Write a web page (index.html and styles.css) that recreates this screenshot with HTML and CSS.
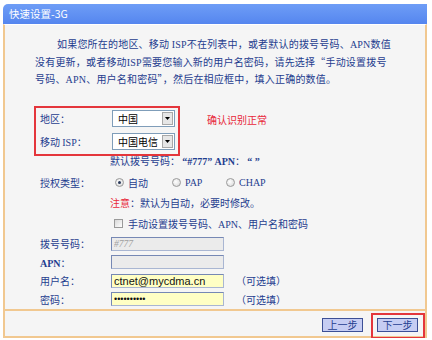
FILE: index.html
```html
<!DOCTYPE html>
<html lang="zh-CN">
<head>
<meta charset="utf-8">
<title>快速设置-3G</title>
<link rel="stylesheet" href="styles.css">
</head>
<body>
<div class="window">
  <div class="title">快速设置-3G</div>
  <div class="panel">
    <p class="intro">如果您所在的地区、移动 <span class="latin">ISP</span>不在列表中，或者默认的拨号号码、<span class="latin">APN</span>数值<br>没有更新，或者移动<span class="latin">ISP</span>需要您输入新的用户名密码，请先选择“手动设置拨号<br>号码、<span class="latin">APN</span>、用户名和密码”，然后在相应框中，填入正确的数值。</p>

    <div class="isp-area">
      <div class="isp-box">
        <div class="isp-row first">
          <span class="label">地区：</span>
          <div class="select"><span class="select-text">中国</span><svg class="arrow" width="11" height="13" viewBox="0 0 11 13"><rect x="0.5" y="0.5" width="10" height="12" fill="#e6e6e6" stroke="#a8a8a8"/><polygon points="3,5 8,5 5.5,8" fill="#000"/></svg></div>
        </div>
        <div class="isp-row second">
          <span class="label">移动 <span class="latin">ISP</span>：</span>
          <div class="select"><span class="select-text">中国电信</span><svg class="arrow" width="11" height="13" viewBox="0 0 11 13"><rect x="0.5" y="0.5" width="10" height="12" fill="#e6e6e6" stroke="#a8a8a8"/><polygon points="3,5 8,5 5.5,8" fill="#000"/></svg></div>
        </div>
      </div>
      <span class="red-note">确认识别正常</span>
    </div>

    <div class="form">
      <div class="default-line">默认拨号号码： <span class="latin bold">“#777”</span> <span class="latin bold">APN</span>： <span class="latin bold">“ ”</span></div>

      <div class="form-row auth-row">
        <span class="label wide">授权类型：</span>
        <span class="option opt-auto"><span class="radio checked"></span>自动</span>
        <span class="option opt-pap"><span class="radio"></span><span class="latin">PAP</span></span>
        <span class="option"><span class="radio"></span><span class="latin">CHAP</span></span>
      </div>

      <div class="form-row note-row"><span><span class="warn">注意</span>：默认为自动，必要时修改。</span></div>

      <div class="form-row check-row"><span class="checkbox"></span><span>手动设置拨号号码、<span class="latin">APN</span>、用户名和密码</span></div>

      <div class="form-row field-row dial-row">
        <span class="label">拨号号码：</span>
        <input class="field disabled hint" type="text" value="#777" disabled>
      </div>
      <div class="form-row field-row">
        <span class="label"><span class="latin bold">APN</span>：</span>
        <input class="field disabled" type="text" value="" disabled>
      </div>
      <div class="form-row field-row">
        <span class="label">用户名：</span>
        <input class="field editable" type="text" value="ctnet@mycdma.cn">
        <span class="optional">（可选填）</span>
      </div>
      <div class="form-row field-row">
        <span class="label">密码：</span>
        <input class="field editable pass" type="password" value="1234567890">
        <span class="optional">（可选填）</span>
      </div>
    </div>
  </div>
  <div class="footer">
    <button class="btn prev" type="button">上一步</button>
    <span class="highlight"><button class="btn" type="button">下一步</button></span>
  </div>
</div>
</body>
</html>
```

FILE: styles.css
```css
body {
  margin: 0;
  background: #ffffff;
  font-family: "Noto Sans CJK SC", "Noto Sans", sans-serif;
  font-size: 10px;
  color: #1f3d8f;
}

.latin {
  font-family: "Liberation Serif", "Noto Sans CJK SC", serif;
}

.bold {
  font-weight: bold;
}

.window {
  width: 424px;
  margin: 4px 0 0 3px;
}

.title {
  height: 20px;
  line-height: 20px;
  padding-left: 6px;
  background: linear-gradient(#6e9df6, #5586ef);
  color: #ffffff;
  font-size: 10.5px;
  border-radius: 5px 0 0 0;
}

.panel {
  height: 284px;
  background: #f5f5f5;
  border-left: 2px solid #f1c890;
  border-right: 2px solid #f1c890;
  border-top: 1px solid #ffffff;
}

.intro {
  margin: 11px 0 0;
  padding: 0 20px 0 30px;
  line-height: 16.5px;
  text-indent: 22px;
  letter-spacing: 0.2px;
  white-space: nowrap;
}

.isp-area {
  display: flex;
  align-items: flex-start;
  margin: 17px 0 0 29px;
}

.isp-box {
  width: 146px;
  height: 50px;
  box-sizing: border-box;
  border: 2px solid #e4363c;
  padding-left: 4px;
}

.isp-row {
  display: flex;
  align-items: center;
}

.isp-row.first {
  height: 22px;
}

.isp-row.second {
  height: 24px;
}

.label {
  width: 72px;
  flex: none;
}

.label.wide {
  width: 75px;
}

.select {
  width: 63px;
  height: 17px;
  box-sizing: border-box;
  border: 1px solid #7f9db9;
  background: #ffffff;
  display: flex;
  align-items: center;
  justify-content: space-between;
  padding: 0 1px 0 5px;
  color: #000000;
}

.arrow {
  display: block;
}

.red-note {
  color: #e8283a;
  margin: 7px 0 0 27px;
  line-height: 14px;
}

.form {
  padding-left: 35px;
}

.default-line {
  height: 10px;
  line-height: 10px;
  padding-left: 70px;
  white-space: nowrap;
}

.form-row {
  display: flex;
  align-items: center;
  height: 18px;
  white-space: nowrap;
}

.auth-row {
  margin-top: 8px;
}

.option {
  display: inline-flex;
  align-items: center;
  gap: 4px;
}

.opt-auto {
  width: 57px;
}

.opt-pap {
  width: 54px;
}

.radio {
  width: 7px;
  height: 7px;
  border-radius: 50%;
  border: 1px solid #9a9a9a;
  background: radial-gradient(circle at 40% 40%, #ffffff, #d4d4d4);
  display: inline-block;
  box-sizing: content-box;
  position: relative;
}

.radio.checked::after {
  content: "";
  position: absolute;
  left: 2px;
  top: 2px;
  width: 3px;
  height: 3px;
  border-radius: 50%;
  background: #2a3a5a;
}

.note-row {
  margin-top: 2px;
  padding-left: 70px;
}

.warn {
  color: #e8283a;
}

.check-row {
  margin-top: 3px;
  padding-left: 74px;
  gap: 5px;
}

.checkbox {
  width: 7px;
  height: 7px;
  border: 1px solid #9a9a9a;
  background: linear-gradient(135deg, #d8d8d8, #ffffff);
  display: inline-block;
}

.dial-row {
  margin-top: 2px;
}

.field-row {
  height: 18.5px;
}

.field-row .label {
  width: 71px;
}

.field {
  width: 113px;
  height: 14px;
  box-sizing: border-box;
  margin: 0;
  padding: 0 2px;
  border: 1px solid #7688b4;
  border-right-color: #a9b6d2;
  border-bottom-color: #a9b6d2;
  font-family: "Liberation Sans", Arial, sans-serif;
  font-size: 11px;
  color: #111111;
  outline: none;
}

.field.disabled {
  background: #ebebeb;
}

.field.hint {
  font-family: "Liberation Serif", serif;
  font-style: italic;
  font-size: 9.5px;
  color: #a0a0a0;
}

.field.editable {
  background: #ffffc4;
}

.field.pass {
  font-size: 9px;
  letter-spacing: 0;
}

.optional {
  margin-left: 12px;
}

.footer {
  height: 23px;
  background: #f5f5f5;
  border: 2px solid #f1c890;
  display: flex;
  justify-content: flex-end;
  align-items: flex-start;
  gap: 8px;
  padding-top: 2px;
  box-sizing: content-box;
}

.btn {
  width: 41px;
  height: 14px;
  margin: 0;
  padding: 0;
  border: 1px solid #3c4f96;
  background: #c6cdf3;
  color: #1f3d8f;
  font-family: "Noto Sans CJK SC", sans-serif;
  font-size: 10px;
  line-height: 12px;
}

.btn.prev {
  margin-top: 5px;
}

.highlight {
  display: inline-flex;
  border: 2px solid #e4363c;
  padding: 3px 5px 5px 4px;
}
```
